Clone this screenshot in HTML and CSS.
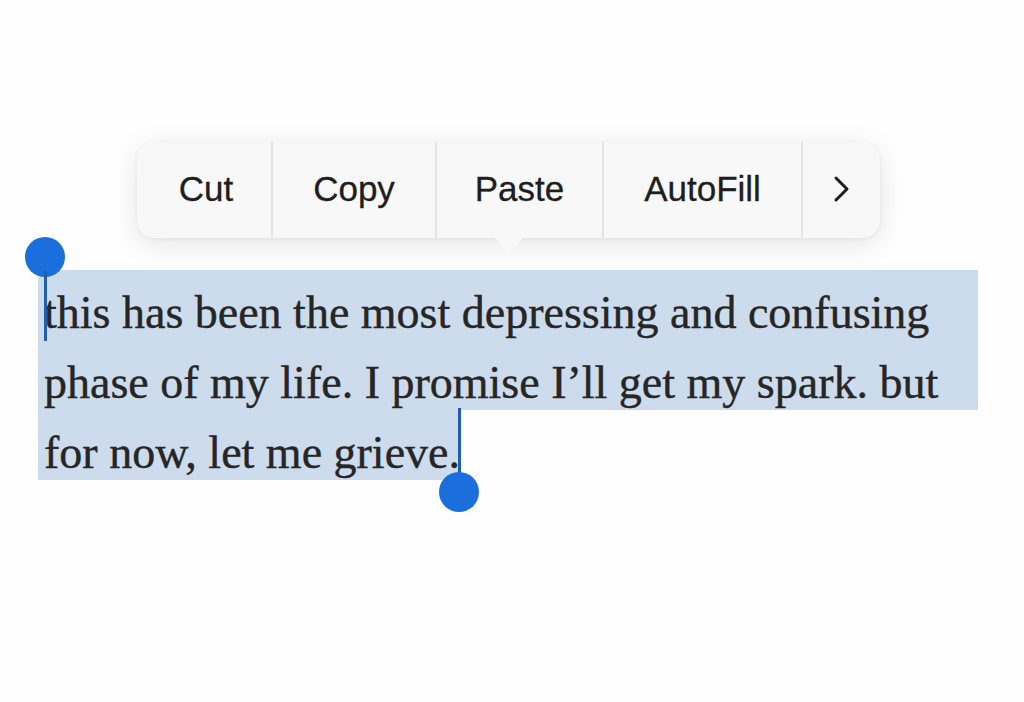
FILE: index.html
```html
<!DOCTYPE html>
<html>
<head>
<meta charset="utf-8">
<link rel="stylesheet" href="styles.css">
</head>
<body>
<div class="page">
  <div class="menu">
    <div class="item item-cut">Cut</div>
    <div class="item item-copy">Copy</div>
    <div class="item item-paste">Paste</div>
    <div class="item item-autofill">AutoFill</div>
    <div class="item item-more">
      <svg width="18" height="28" viewBox="0 0 18 28"><path d="M4 3 L15 14 L4 25" fill="none" stroke="#1e1e1e" stroke-width="3" stroke-linecap="round" stroke-linejoin="round"/></svg>
    </div>
    <div class="pointer"></div>
  </div>
  <div class="selection">
    <div class="line full">this has been the most depressing and confusing</div>
    <div class="line full">phase of my life. I promise I’ll get my spark. but</div>
    <div class="line last">for now, let me grieve.</div>
    <div class="handle handle-start"><span class="knob"></span><span class="stem"></span></div>
    <div class="handle handle-end"><span class="stem"></span><span class="knob"></span></div>
  </div>
</div>
</body>
</html>
```
FILE: styles.css
```css
html, body { margin: 0; padding: 0; background: #fefefe; }
.page {
  width: 1024px; height: 702px; overflow: hidden;
  padding-top: 142px; box-sizing: border-box;
}
.menu {
  position: relative;
  margin-left: 137px;
  width: 743px;
  height: 96px;
  display: flex;
  background: #f8f8f8;
  border-radius: 18px;
  box-shadow: 0 6px 28px rgba(0,0,0,0.10), 0 1px 4px rgba(0,0,0,0.05);
  font-family: "Liberation Sans", Arial, sans-serif;
  font-size: 35px;
  color: #1e1e1e;
  -webkit-text-stroke: 0.3px #1e1e1e;
}
.item {
  display: flex; align-items: center; justify-content: center;
  border-right: 2px solid #e4e4e4;
  box-sizing: border-box;
  padding-bottom: 2px;
}
.item-cut { width: 136px; padding-left: 4px; }
.item-copy { width: 164px; }
.item-paste { width: 167px; }
.item-autofill { width: 199px; }
.item-more { flex: 1; border-right: none; padding-right: 2px; }
.pointer {
  position: absolute; left: 358px; top: 96px;
  width: 0; height: 0;
  border-left: 14px solid transparent;
  border-right: 14px solid transparent;
  border-top: 15px solid #f8f8f8;
}
.selection {
  position: relative;
  margin-top: 32px;
  margin-left: 38px;
  width: 940px;
  font-family: "Liberation Serif", "Times New Roman", serif;
  font-size: 46px;
  color: #262626;
  -webkit-text-stroke: 0.4px #262626;
}
.line {
  background: #cddcec;
  height: 70px;
  line-height: 52px;
  padding-top: 17px;
  padding-left: 6px;
  box-sizing: border-box;
  white-space: nowrap;
}
.line.last { display: inline-block; width: 422px; vertical-align: top; }
.handle { position: absolute; display: flex; flex-direction: column; align-items: center; }
.knob { width: 40px; height: 40px; border-radius: 50%; background: #1b6fdd; }
.stem { width: 3px; background: #1f5fb0; }
.handle-start { left: -13px; top: -33px; }
.handle-start .stem { height: 70px; margin-top: -6px; }
.handle-end { left: 401px; top: 138px; }
.handle-end .stem { height: 72px; margin-bottom: -8px; }
```
